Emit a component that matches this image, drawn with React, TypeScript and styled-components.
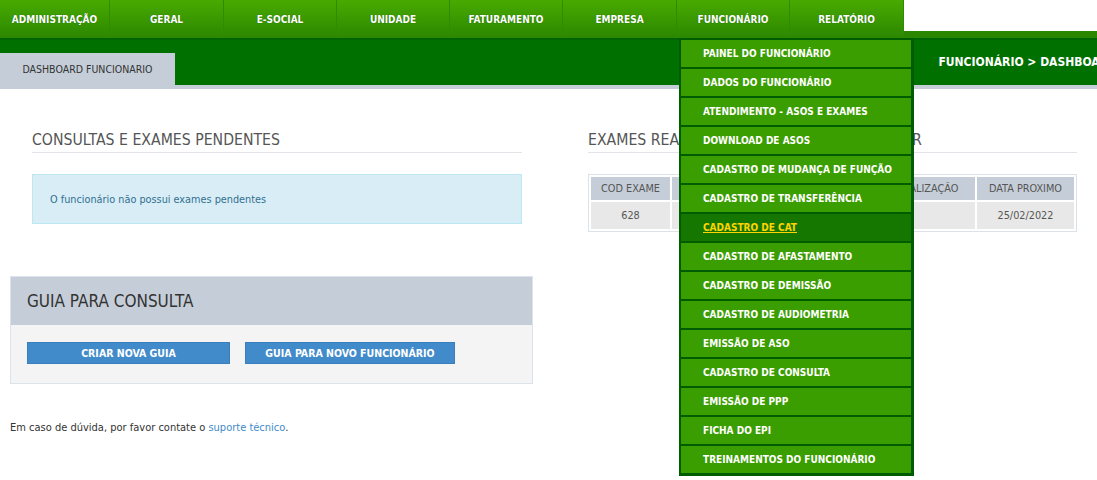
import React from 'react';
import styled, { createGlobalStyle } from 'styled-components';

const GlobalStyle = createGlobalStyle`
  html, body {
    margin: 0;
    padding: 0;
    background: #fff;
  }
  body {
    font-family: "DejaVu Sans Condensed", "Liberation Sans", Arial, sans-serif;
    font-size: 12px;
    color: #333;
  }
  * { box-sizing: border-box; }
`;

const Page = styled.div`
  width: 1097px;
  min-height: 480px;
  position: relative;
  overflow: hidden;
`;

const TopNav = styled.nav`
  display: flex;
  height: 38px;
`;

const NavItem = styled.div<{ $w: number }>`
  position: relative;
  width: ${p => p.$w}px;
  height: 38px;
  display: flex;
  align-items: center;
  justify-content: center;
  background: linear-gradient(#48aa00, #2c8700);
  border-right: 1px solid #2f8c00;
  color: #fff;
  font-weight: bold;
  font-size: 10px;
  text-shadow: 0 0 1px rgba(0, 60, 0, 0.6);
  cursor: pointer;
`;

const NavFill = styled.div`
  flex: 1;
  background: #fff;
  border-bottom: 7px solid #2c8700;
`;

const SubBar = styled.div`
  height: 47px;
  background: #007000;
  border-top: 2px solid #006400;
  display: flex;
  align-items: flex-end;
  justify-content: space-between;
`;

const Tab = styled.div`
  width: 175px;
  height: 32px;
  background: #c5ced8;
  color: #333;
  font-size: 10.5px;
  display: flex;
  align-items: center;
  justify-content: center;
`;

const Crumb = styled.div`
  align-self: center;
  margin-top: -2px;
  color: #fff;
  font-weight: bold;
  font-size: 12px;
  white-space: nowrap;
  margin-right: -20px;
`;

const Stripe = styled.div`
  height: 4px;
  background: #c5ced8;
`;

const Columns = styled.div`
  display: flex;
  gap: 66px;
  padding: 41px 20px 0 32px;
`;

const Column = styled.section<{ $w: number }>`
  width: ${p => p.$w}px;
`;

const Title = styled.h3`
  margin: 0 0 21px;
  padding-bottom: 3px;
  border-bottom: 1px solid #e1e4e8;
  font-weight: normal;
  font-size: 15.7px;
  color: #555;
  white-space: nowrap;
  overflow: hidden;
`;

const InfoBox = styled.div`
  height: 50px;
  background: #d9edf7;
  border: 1px solid #bce8f1;
  color: #31708f;
  font-size: 10.8px;
  display: flex;
  align-items: center;
  padding-left: 17px;
`;

const Table = styled.table`
  width: 100%;
  border: 1px solid #dde2e8;
  border-spacing: 2px;
  font-size: 10.8px;
  color: #555;
`;

const Th = styled.th<{ $w?: number }>`
  background: #c5ced8;
  font-weight: normal;
  height: 23px;
  width: ${p => (p.$w ? `${p.$w}px` : 'auto')};
  text-align: center;
  white-space: nowrap;
`;

const Td = styled.td`
  background: #e8e8e8;
  height: 27px;
  text-align: center;
`;

const Panel = styled.div`
  width: 523px;
  margin: 44px 0 0 10px;
  border: 1px solid #dde3ec;
  background: #f4f4f4;
`;

const PanelHead = styled.div`
  height: 48px;
  background: #c5ced8;
  display: flex;
  align-items: center;
  padding-left: 16px;
  font-size: 17px;
  color: #333;
`;

const PanelBody = styled.div`
  display: flex;
  gap: 15px;
  padding: 17px 16px 19px;
`;

const Button = styled.button<{ $w: number }>`
  width: ${p => p.$w}px;
  height: 22px;
  border: 1px solid #3a7fbd;
  background: #428bca;
  color: #fff;
  font-family: inherit;
  font-weight: bold;
  font-size: 10.5px;
  cursor: pointer;
`;

const Footer = styled.p`
  margin: 37px 0 0 10px;
  font-size: 11px;
  color: #333;
`;

const Link = styled.a`
  color: #428bca;
  text-decoration: none;
`;

const Dropdown = styled.ul`
  position: absolute;
  top: 38px;
  left: 2px;
  width: 235px;
  margin: 0;
  padding: 2px 3px 3px 2px;
  list-style: none;
  background: #005c00;
  display: flex;
  flex-direction: column;
  gap: 2px;
  z-index: 10;
  text-shadow: none;
`;

const DropItem = styled.li<{ $active?: boolean }>`
  height: 27px;
  display: flex;
  align-items: center;
  padding-left: 22px;
  background: ${p => (p.$active ? '#167700' : '#3a9d00')};
  color: ${p => (p.$active ? '#ffd400' : '#fff')};
  text-decoration: ${p => (p.$active ? 'underline' : 'none')};
  font-weight: bold;
  font-size: 10px;
  white-space: nowrap;
`;

const menu = [
  { label: 'ADMINISTRAÇÃO', w: 110 },
  { label: 'GERAL', w: 114 },
  { label: 'E-SOCIAL', w: 113 },
  { label: 'UNIDADE', w: 113 },
  { label: 'FATURAMENTO', w: 113 },
  { label: 'EMPRESA', w: 114 },
  { label: 'FUNCIONÁRIO', w: 113 },
  { label: 'RELATÓRIO', w: 114 },
];

const funcItems = [
  'PAINEL DO FUNCIONÁRIO',
  'DADOS DO FUNCIONÁRIO',
  'ATENDIMENTO - ASOS E EXAMES',
  'DOWNLOAD DE ASOS',
  'CADASTRO DE MUDANÇA DE FUNÇÃO',
  'CADASTRO DE TRANSFERÊNCIA',
  'CADASTRO DE CAT',
  'CADASTRO DE AFASTAMENTO',
  'CADASTRO DE DEMISSÃO',
  'CADASTRO DE AUDIOMETRIA',
  'EMISSÃO DE ASO',
  'CADASTRO DE CONSULTA',
  'EMISSÃO DE PPP',
  'FICHA DO EPI',
  'TREINAMENTOS DO FUNCIONÁRIO',
];

const App: React.FC = () => {
  return (
    <Page>
      <GlobalStyle />
      <TopNav>
        {menu.map(m => (
          <NavItem key={m.label} $w={m.w}>
            {m.label}
            {m.label === 'FUNCIONÁRIO' && (
              <Dropdown>
                {funcItems.map(it => (
                  <DropItem key={it} $active={it === 'CADASTRO DE CAT'}>{it}</DropItem>
                ))}
              </Dropdown>
            )}
          </NavItem>
        ))}
        <NavFill />
      </TopNav>
      <SubBar>
        <Tab>DASHBOARD FUNCIONARIO</Tab>
        <Crumb>FUNCIONÁRIO &gt; DASHBOARD</Crumb>
      </SubBar>
      <Stripe />

      <Columns>
        <Column $w={490}>
          <Title>CONSULTAS E EXAMES PENDENTES</Title>
          <InfoBox>O funcionário não possui exames pendentes</InfoBox>
        </Column>
        <Column $w={489}>
          <Title>EXAMES REALIZADOS E PRÓXIMOS A REALIZAR</Title>
          <Table>
            <thead>
              <tr>
                <Th $w={79}>COD EXAME</Th>
                <Th>EXAME</Th>
                <Th $w={123}>DATA REALIZAÇÃO</Th>
                <Th $w={97}>DATA PROXIMO</Th>
              </tr>
            </thead>
            <tbody>
              <tr>
                <Td>628</Td>
                <Td>AUDIOMETRIA</Td>
                <Td></Td>
                <Td>25/02/2022</Td>
              </tr>
            </tbody>
          </Table>
        </Column>
      </Columns>

      <Panel>
        <PanelHead>GUIA PARA CONSULTA</PanelHead>
        <PanelBody>
          <Button $w={203}>CRIAR NOVA GUIA</Button>
          <Button $w={210}>GUIA PARA NOVO FUNCIONÁRIO</Button>
        </PanelBody>
      </Panel>

      <Footer>
        Em caso de dúvida, por favor contate o <Link href="#">suporte técnico</Link>.
      </Footer>
    </Page>
  );
};

export default App;
